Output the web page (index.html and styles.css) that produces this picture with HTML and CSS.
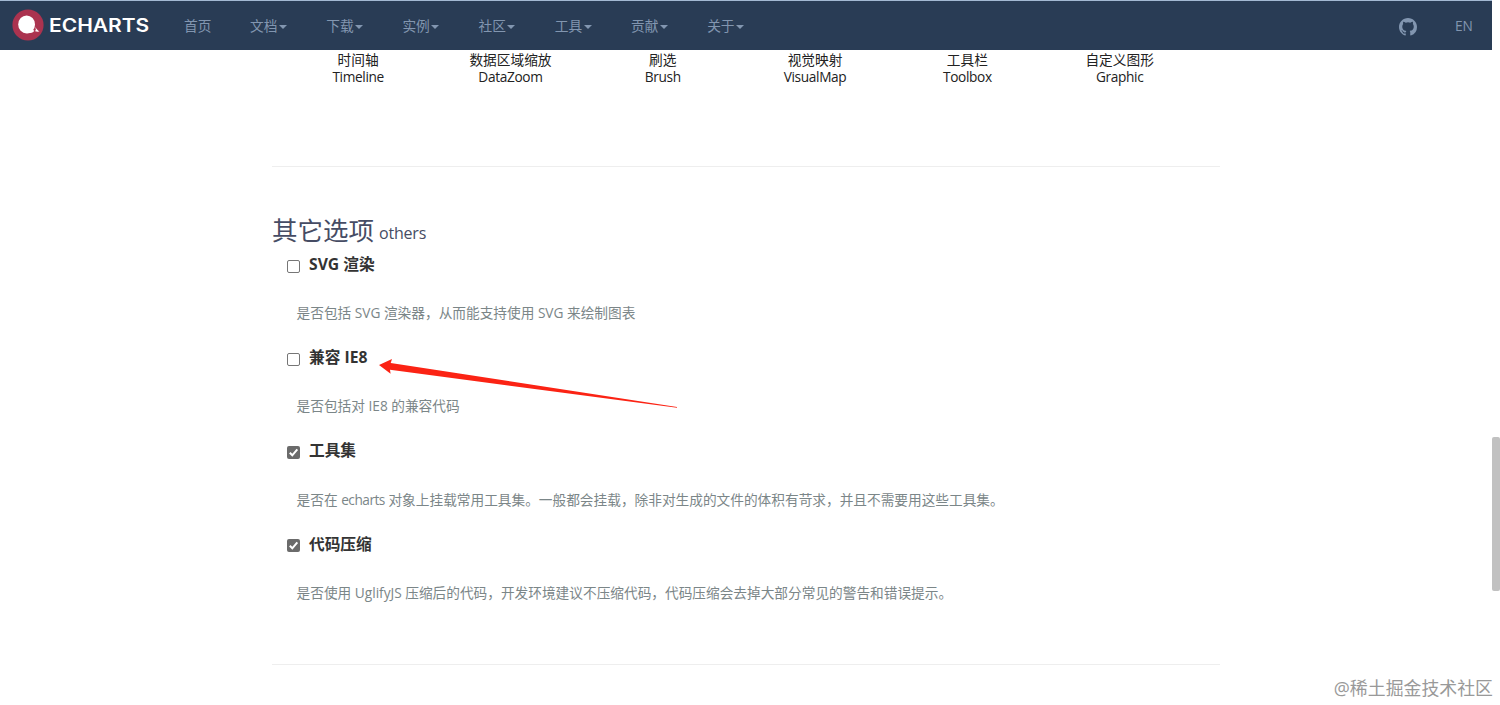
FILE: index.html
```html
<!DOCTYPE html>
<html lang="zh-CN">
<head>
<meta charset="utf-8">
<title>ECharts 在线构建</title>
<link rel="stylesheet" href="styles.css">
</head>
<body>
<header class="navbar">
  <a class="brand">
    <svg class="brand-mark" width="32" height="32" viewBox="0 0 32 32">
      <circle cx="16" cy="16" r="15.6" fill="#ab334f"/>
      <ellipse cx="14.600" cy="15.400" rx="8.400" ry="9" fill="#fff"/>
      <path d="M15 24.300c3 .2 6.200-.3 7.200-2.200l-3-4z" fill="#fff"/>
      <path d="M23.300 17.400c.3 1.500 2.400 4 4.200 5.200-1.500.2-3.400.2-5-.6l1.400-.8z" fill="#fff"/>
    </svg>
    <span class="brand-name">ECHARTS</span>
  </a>
  <nav class="menu">
    <a class="menu-item">首页</a>
    <a class="menu-item">文档<i class="caret"></i></a>
    <a class="menu-item">下载<i class="caret"></i></a>
    <a class="menu-item">实例<i class="caret"></i></a>
    <a class="menu-item">社区<i class="caret"></i></a>
    <a class="menu-item">工具<i class="caret"></i></a>
    <a class="menu-item">贡献<i class="caret"></i></a>
    <a class="menu-item">关于<i class="caret"></i></a>
  </nav>
  <svg class="github" width="18" height="18" viewBox="0 0 16 16"><path fill="#8296b0" d="M8 0C3.580 0 0 3.580 0 8c0 3.540 2.290 6.530 5.470 7.590.4.070.55-.17.55-.38 0-.19-.01-.82-.01-1.490-2.010.37-2.530-.49-2.690-.94-.09-.23-.48-.94-.82-1.130-.28-.15-.68-.52-.01-.53.63-.01 1.080.58 1.230.82.72 1.210 1.870.87 2.330.66.070-.52.28-.87.51-1.070-1.780-.2-3.640-.89-3.640-3.950 0-.87.31-1.590.82-2.150-.08-.2-.36-1.020.08-2.120 0 0 .67-.21 2.200.82a7.600 7.600 0 0 1 4 0c1.530-1.040 2.200-.82 2.200-.82.44 1.100.16 1.920.08 2.120.51.56.82 1.270.82 2.150 0 3.070-1.870 3.750-3.650 3.950.29.25.54.73.54 1.480 0 1.070-.01 1.930-.01 2.200 0 .21.15.46.55.38A8 8 0 0 0 16 8c0-4.420-3.580-8-8-8z"/></svg>
  <a class="lang">EN</a>
</header>

<main class="content">
  <section class="components">
    <div class="component">时间轴<span>Timeline</span></div>
    <div class="component">数据区域缩放<span>DataZoom</span></div>
    <div class="component">刷选<span>Brush</span></div>
    <div class="component">视觉映射<span>VisualMap</span></div>
    <div class="component">工具栏<span>Toolbox</span></div>
    <div class="component">自定义图形<span>Graphic</span></div>
  </section>

  <section class="others">
    <h2 class="title">其它选项<small>others</small></h2>
    <div class="option">
      <label class="option-head"><span class="box"></span><b>SVG 渲染</b></label>
      <p class="desc">是否包括 SVG 渲染器，从而能支持使用 SVG 来绘制图表</p>
    </div>
    <div class="option">
      <label class="option-head"><span class="box"></span><b>兼容 IE8</b></label>
      <p class="desc">是否包括对 IE8 的兼容代码</p>
      <svg class="arrow" width="300" height="52" viewBox="0 0 300 52"><path fill="#fb2314" d="M0 10 13 4l-1.300 4L298 52v.7L11 14.800l.6 4z"/></svg>
    </div>
    <div class="option">
      <label class="option-head"><span class="box checked"><svg width="13" height="13" viewBox="0 0 13 13"><path d="M2.800 6.800 5.300 9.300 10.300 3.300" fill="none" stroke="#fff" stroke-width="2"/></svg></span><b>工具集</b></label>
      <p class="desc">是否在 <span class="word">echarts</span> 对象上挂载常用工具集。一般都会挂载，除非对生成的文件的体积有苛求，并且不需要用这些工具集。</p>
    </div>
    <div class="option">
      <label class="option-head"><span class="box checked"><svg width="13" height="13" viewBox="0 0 13 13"><path d="M2.800 6.800 5.300 9.300 10.300 3.300" fill="none" stroke="#fff" stroke-width="2"/></svg></span><b>代码压缩</b></label>
      <p class="desc">是否使用 UglifyJS 压缩后的代码，开发环境建议不压缩代码，代码压缩会去掉大部分常见的警告和错误提示。</p>
    </div>
  </section>
</main>
<div class="scroll-thumb"></div>
<div class="watermark">@稀土掘金技术社区</div>
</body>
</html>
```
FILE: styles.css
```css
* { box-sizing: border-box; }
body {
  margin: 0;
  height: 705px;
  overflow: hidden;
  background: #fff;
  color: #333;
  font-family: "Open Sans", "Noto Sans CJK SC", sans-serif;
  font-size: 13.7px;
}
.navbar {
  width: 1492px;
  height: 50px;
  padding-left: 12px;
  display: flex;
  align-items: center;
  background: #293c55;
  border-top: 1px solid #a3b9d3;
  color: #8296b0;
}
.brand { display: flex; align-items: center; width: 172px; gap: 5px; padding-bottom: 1px; }
.brand-name {
  padding-top: 2px;
  font-family: Inter, sans-serif;
  font-size: 18px;
  font-weight: 600;
  line-height: 30px;
  color: #fff;
  white-space: nowrap;
  transform: scaleX(1.165);
  transform-origin: left;
}
.menu { display: flex; flex: 1; }
.menu-item { width: 76.200px; white-space: nowrap; line-height: 20px; }
.menu-item:first-child { width: 66px; }
.caret {
  display: inline-block;
  margin-left: 1.500px;
  vertical-align: 1.500px;
  border: 4px solid transparent;
  border-top-color: currentColor;
  border-bottom: 0;
}
.github { margin: 2px 38px 0 0; }
.lang { width: 37px; letter-spacing: -.2px; }
.content { width: 948px; margin-left: 272px; }
.components {
  height: 117px;
  padding: 1px 17px 0 10px;
  display: grid;
  grid-template-columns: repeat(6, 152.300px);
  align-items: start;
  border-bottom: 1px solid #eee;
  line-height: 17px;
  text-align: center;
  color: #222;
}
.component span { display: block; letter-spacing: -.35px; }
.others { height: 498px; padding-top: 44px; border-bottom: 1px solid #eee; }
.title {
  margin: 0;
  height: 42px;
  line-height: 38px;
  font-size: 25.500px;
  font-weight: 400;
  color: #464c64;
}
.title small { margin-left: 5px; font-size: 16px; letter-spacing: -.2px; vertical-align: 1px; }
.option { position: relative; height: 93.200px; padding-left: 15px; }
.option-head { display: flex; gap: 9px; height: 25px; line-height: 22px; font-size: 15.700px; }
.option-head b { font-weight: 700; }
.box { width: 13px; height: 13px; margin-top: 6.700px; border: 1px solid #767676; border-radius: 2px; }
.box.checked { background: #6b6b6b; border: 0; }
.box svg { display: block; }
.desc { margin: 25.300px 0 0 9.600px; line-height: 20px; color: #7b8688; white-space: nowrap; letter-spacing: -.015px; }
.word { letter-spacing: -.5px; }
.arrow { position: absolute; left: 107px; top: 9px; overflow: visible; }
.scroll-thumb { position: absolute; left: 1492px; top: 437px; width: 8px; height: 154px; background: #c1c1c1; border-radius: 2px; }
.watermark {
  position: absolute;
  right: 7px;
  bottom: 4px;
  font-size: 17.900px;
  line-height: 26px;
  color: #999;
  text-shadow: .6px .6px 0 #fff;
}
```
